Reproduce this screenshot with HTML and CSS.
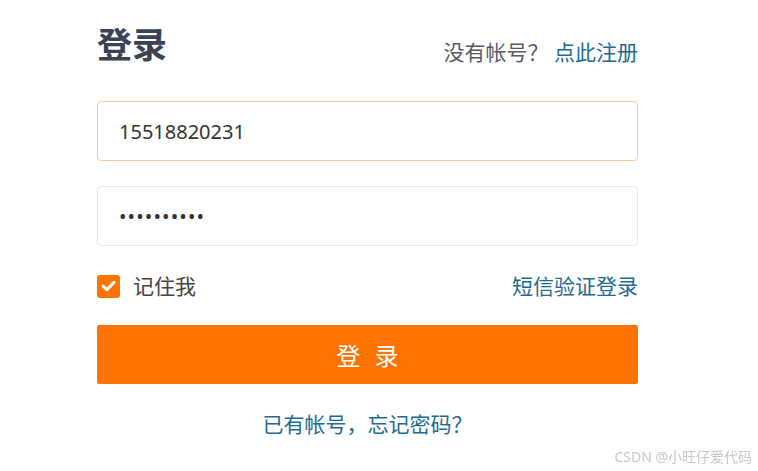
FILE: index.html
```html
<!DOCTYPE html>
<html lang="zh-CN">
<head>
    <meta charset="UTF-8">
    <meta name="viewport" content="width=device-width, initial-scale=1.0">
    <title>登录</title>
    <link rel="stylesheet" href="styles.css">
</head>
<body>
    <div class="login-box">
        <div class="login-head">
            <h1>登录</h1>
            <p class="to-register">没有帐号？ <a href="#">点此注册</a></p>
        </div>
        <input class="field field-active" type="text" value="15518820231">
        <input class="field field-pwd" type="password" value="1234567890">
        <div class="login-opts">
            <label class="remember">
                <span class="check">
                    <svg width="15" height="12" viewBox="0 0 15 12"><path d="M2 6 L5.8 9.6 L13 2.4" fill="none" stroke="#fff" stroke-width="3" stroke-linecap="round" stroke-linejoin="round"/></svg>
                </span>
                记住我
            </label>
            <a href="#">短信验证登录</a>
        </div>
        <button class="login-btn">登录</button>
        <a class="forgot" href="#">已有帐号，忘记密码？</a>
    </div>
    <div class="mark">CSDN @小旺仔爱代码</div>
</body>
</html>
```

FILE: styles.css
```css
body {
    margin: 0;
    background: #fff;
    font-family: "Noto Sans", "Noto Sans CJK SC", sans-serif;
    color: #444;
}
a {
    color: #1d6a92;
    text-decoration: none;
}
.login-box {
    width: 541px;
    margin-left: 97px;
    padding-top: 18px;
    display: flex;
    flex-direction: column;
}
.login-head {
    display: flex;
    justify-content: space-between;
    align-items: flex-end;
    height: 50px;
}
.login-head h1 {
    margin: 0;
    font-size: 35px;
    line-height: 46px;
    font-weight: 700;
    color: #3b4255;
}
.to-register {
    margin: 0 0 3px;
    font-size: 21px;
    line-height: 26px;
    color: #555b66;
}
.field {
    box-sizing: border-box;
    width: 100%;
    height: 60px;
    margin-top: 33px;
    padding: 0 21px;
    border: 1px solid #e6e7ea;
    border-radius: 4px;
    outline: none;
    font-family: "Noto Sans", "Noto Sans CJK SC", sans-serif;
    font-size: 20px;
    color: #333;
}
.field + .field {
    margin-top: 25px;
}
.field-active {
    border-color: #fdc79a;
}
.field-pwd {
    letter-spacing: 1.1px;
}
.login-opts {
    display: flex;
    justify-content: space-between;
    align-items: center;
    margin-top: 26px;
    font-size: 21px;
    line-height: 28px;
}
.remember {
    display: flex;
    align-items: center;
    gap: 13px;
    color: #444;
}
.check {
    width: 23px;
    height: 23px;
    border-radius: 3px;
    background: #ff7300;
    display: flex;
    align-items: center;
    justify-content: center;
}
.login-btn {
    margin-top: 25px;
    height: 59px;
    border: none;
    border-radius: 2px;
    background: #ff7300;
    color: #fff;
    font-family: "Noto Sans CJK SC", sans-serif;
    font-size: 24px;
    letter-spacing: 14px;
    text-indent: 14px;
    cursor: pointer;
}
.forgot {
    align-self: center;
    margin-top: 26px;
    font-size: 21px;
    line-height: 28px;
}
.mark {
    position: fixed;
    right: 6px;
    bottom: 5px;
    font-size: 14px;
    color: #c8c8c8;
}
```
